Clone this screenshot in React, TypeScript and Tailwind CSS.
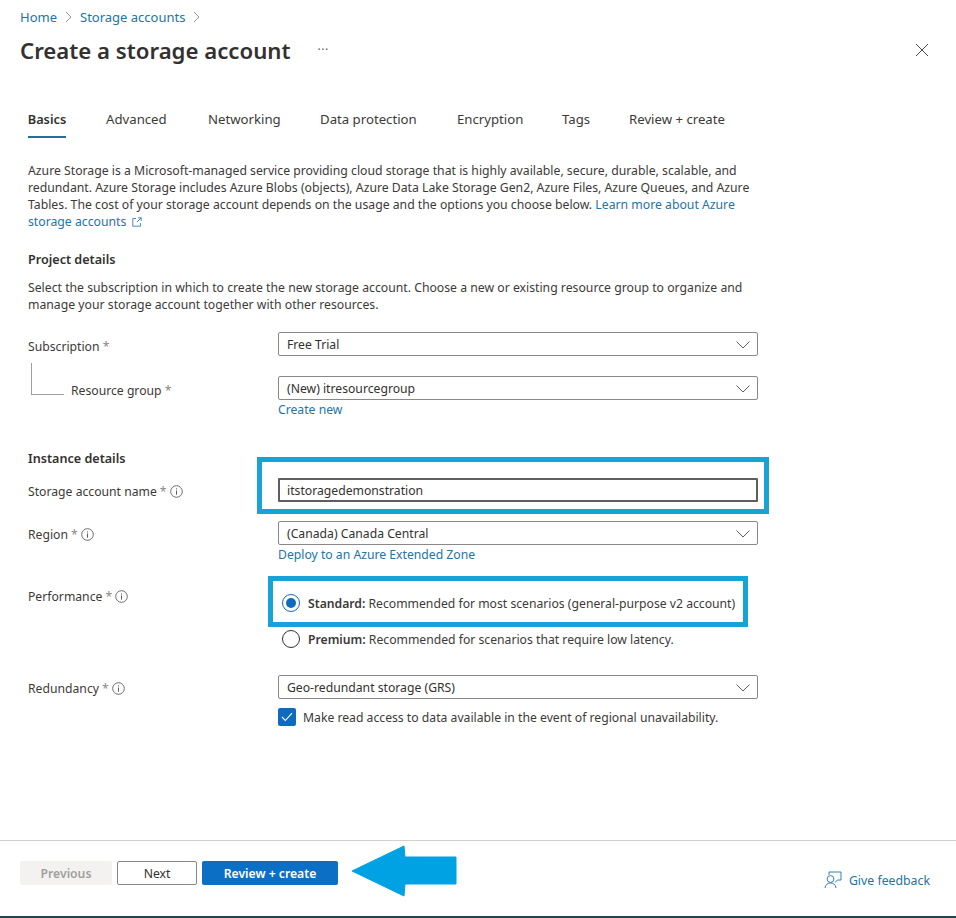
import React from "react";

const link = "text-[#2274a5]";

function Chevron() {
  return (
    <svg width="14" height="8" viewBox="0 0 14 8" className="absolute right-[7px] top-[8px]">
      <path d="M0.5 0.5 L7 7 L13.5 0.5" fill="none" stroke="#605e5c" strokeWidth="1" />
    </svg>
  );
}

function Info() {
  return (
    <svg width="13" height="13" viewBox="0 0 13 13" className="ml-[3px] shrink-0">
      <circle cx="6.5" cy="6.5" r="5.8" fill="none" stroke="#605e5c" strokeWidth="0.9" />
      <rect x="6" y="5.5" width="1" height="4.2" fill="#605e5c" />
      <rect x="6" y="3.4" width="1" height="1.1" fill="#605e5c" />
    </svg>
  );
}

function Select({ value }: { value: string }) {
  return (
    <div className="relative flex h-[24px] w-[480px] items-center rounded-[2px] border border-[#8a8886] pl-2 text-[#323130]">
      {value}
      <Chevron />
    </div>
  );
}

function Sep() {
  return (
    <svg width="7" height="12" viewBox="0 0 7 12">
      <path d="M1 1 L6 6 L1 11" fill="none" stroke="#8a8886" strokeWidth="0.9" />
    </svg>
  );
}

const tabs: [string, string][] = [
  ["Advanced", "w-[62px]"],
  ["Networking", "w-[72px]"],
  ["Data protection", "w-[97px]"],
  ["Encryption", "w-[65px]"],
  ["Tags", "w-[27px]"],
  ["Review + create", "w-[98px]"],
];

export default function App() {
  return (
    <div className="relative flex h-[918px] w-[956px] flex-col overflow-hidden border-b-2 border-[#1d4650] bg-white font-['Noto_Sans',sans-serif] text-[12.2px] leading-[17px] text-[#3b3a39]">
      <div className="mt-[9px] flex h-[16px] items-center gap-[8px] pl-[20px] text-[13px]">
        <span className={link}>Home</span>
        <Sep />
        <span className={link}>Storage accounts</span>
        <Sep />
      </div>

      <div className="mt-[7px] flex h-[36px] items-center pl-[20px] pr-[27px]">
        <h1 className="text-[22.2px] font-semibold text-[#323130]">Create a storage account</h1>
        <span className="-mt-[1px] ml-[27px] text-[12px] tracking-[0.5px] text-[#605e5c]">···</span>
        <svg width="14" height="14" viewBox="0 0 14 14" className="ml-auto">
          <path d="M1 1 L13 13 M13 1 L1 13" stroke="#4b4a49" strokeWidth="1" />
        </svg>
      </div>

      <div className="mt-[34px] flex h-[36px] gap-[40px] pl-[28px] text-[13.2px]">
        <div className="flex h-[36px] w-[38px] flex-col items-center justify-start whitespace-nowrap border-b-2 border-[#1f6f9f] text-[12.8px] font-semibold leading-[34px] text-[#323130]">
          Basics
        </div>
        {tabs.map(([t, w]) => (
          <div key={t} className={`${w} whitespace-nowrap leading-[34px]`}>
            {t}
          </div>
        ))}
      </div>

      <div className="mt-[24px] w-[730px] pl-[28px] text-[12.24px]">
        <p className="w-[730px] whitespace-nowrap">
          Azure Storage is a Microsoft-managed service providing cloud storage that is highly available, secure, durable, scalable, and
          <br />
          redundant. Azure Storage includes Azure Blobs (objects), Azure Data Lake Storage Gen2, Azure Files, Azure Queues, and Azure
          <br />
          Tables. The cost of your storage account depends on the usage and the options you choose below.{" "}
          <span className={link}>Learn more about Azure</span>
          <br />
          <span className={`${link} inline-flex items-center gap-[6px]`}>
            storage accounts
            <svg width="10" height="10" viewBox="0 0 10 10">
              <path d="M4 1.5 H0.8 V9.2 H8.5 V6 M5 5 L9.2 0.8 M6 0.8 H9.2 V4" fill="none" stroke="#2274a5" strokeWidth="0.8" />
            </svg>
          </span>
        </p>
      </div>

      <h2 className="mt-[21px] pl-[28px] text-[12.6px] font-semibold text-[#323130]">Project details</h2>

      <p className="mt-[11px] whitespace-nowrap pl-[28px] text-[12.24px]">
        Select the subscription in which to create the new storage account. Choose a new or existing resource group to organize and
        <br />
        manage your storage account together with other resources.
      </p>

      <div className="mt-[19px] flex pl-[28px]">
        <div className="w-[250px] pt-[6px]">
          Subscription <span className="text-[#8a8886]">*</span>
        </div>
        <Select value="Free Trial" />
      </div>

      <div className="relative mt-[20px] flex pl-[28px]">
        <div className="absolute -top-[13px] left-[31px] h-[32px] w-[33px] border-b border-l border-[#a19f9d]" />
        <div className="w-[250px] pl-[43px] pt-[6px]">
          Resource group <span className="text-[#8a8886]">*</span>
        </div>
        <Select value="(New) itresourcegroup" />
      </div>

      <div className={`mt-[1px] pl-[278px] ${link}`}>Create new</div>

      <h2 className="mt-[32px] pl-[28px] text-[12.6px] font-semibold text-[#323130]">Instance details</h2>

      <div className="mt-[11px] flex pl-[28px]">
        <div className="flex w-[250px] items-center pt-[2px]">
          Storage account name <span className="ml-[3px] text-[#8a8886]">*</span>
          <Info />
        </div>
        <div className="relative flex h-[24px] w-[480px] items-center rounded-[1px] border-2 border-[#605e5c] pl-[7px] text-[#323130]">
          itstoragedemonstration
          <div className="absolute -bottom-[14px] -left-[23px] -right-[13px] -top-[23px] border-[5px] border-[#17a2d8]" />
        </div>
      </div>

      <div className="mt-[19px] flex pl-[28px]">
        <div className="flex w-[250px] items-center pt-[3px]">
          Region <span className="ml-[3px] text-[#8a8886]">*</span>
          <Info />
        </div>
        <Select value="(Canada) Canada Central" />
      </div>

      <div className={`mt-[1px] pl-[278px] ${link}`}>Deploy to an Azure Extended Zone</div>

      <div className="mt-[25px] flex pl-[28px]">
        <div className="flex h-[17px] w-[250px] items-center self-start">
          Performance <span className="ml-[3px] text-[#8a8886]">*</span>
          <Info />
        </div>
        <div className="flex flex-col gap-[18px] pt-[6px]">
          <div className="relative flex items-center whitespace-nowrap pl-[4px]">
            <span className="flex h-[18px] w-[18px] items-center justify-center rounded-full border border-[#0f6cbd]">
              <span className="h-[10px] w-[10px] rounded-full bg-[#0f6cbd]" />
            </span>
            <span className="ml-[8px]">
              <b className="font-semibold">Standard:</b> Recommended for most scenarios (general-purpose v2 account)
            </span>
            <div className="absolute -bottom-[15px] -top-[18px] left-[-10px] w-[480px] border-[5px] border-[#17a2d8]" />
          </div>
          <div className="flex items-center whitespace-nowrap pl-[4px]">
            <span className="h-[18px] w-[18px] rounded-full border border-[#323130]" />
            <span className="ml-[8px]">
              <b className="font-semibold">Premium:</b> Recommended for scenarios that require low latency.
            </span>
          </div>
        </div>
      </div>

      <div className="mt-[27px] flex pl-[28px]">
        <div className="flex w-[250px] items-center pt-[3px]">
          Redundancy <span className="ml-[3px] text-[#8a8886]">*</span>
          <Info />
        </div>
        <Select value="Geo-redundant storage (GRS)" />
      </div>

      <div className="mt-[9px] flex items-center pl-[278px]">
        <span className="flex h-[18px] w-[18px] items-center justify-center rounded-[2px] bg-[#0f6cbd]">
          <svg width="12" height="10" viewBox="0 0 12 10">
            <path d="M1 5 L4.3 8.5 L11 1.2" fill="none" stroke="#fff" strokeWidth="1.1" />
          </svg>
        </span>
        <span className="ml-[7px]">Make read access to data available in the event of regional unavailability.</span>
      </div>

      <div className="mt-auto flex h-[76px] items-start border-t border-[#d2d0ce] pl-[20px] pr-[26px] pt-[20px]">
        <div className="relative flex gap-[5px] text-[12.2px] font-semibold">
          <div className="flex h-[24px] w-[92px] items-center justify-center rounded-[2px] bg-[#f3f2f1] pt-[1px] text-[#a19f9d]">Previous</div>
          <div className="flex h-[24px] w-[80px] items-center justify-center rounded-[2px] border border-[#8a8886] pt-[1px] font-normal text-[#323130]">Next</div>
          <div className="flex h-[24px] w-[136px] items-center justify-center rounded-[2px] bg-[#0b6fc6] pt-[1px] text-white">Review + create</div>
          <svg width="106" height="52" viewBox="0 0 106 52" className="absolute -top-[16px] left-[331px]">
            <path d="M1 26 L53 1 L54 12 L105 12 L105 39 L54 39 L53 51 Z" fill="#00a2e3" stroke="#00a2e3" strokeLinejoin="round" />
          </svg>
        </div>
        <div className={`ml-auto mt-[10px] flex items-center gap-[7px] text-[12.3px] ${link}`}>
          <svg width="18" height="18" viewBox="0 0 18 18">
            <path d="M5 4 V1 H17 V9 H13.5 L11 11.5" fill="none" stroke="#2274a5" strokeWidth="0.9" />
            <circle cx="6.5" cy="8" r="3.4" fill="none" stroke="#2274a5" strokeWidth="0.9" />
            <path d="M1 17 C1.5 13.5 3.5 12 6.5 12 C9.5 12 11.5 13.5 12 17" fill="none" stroke="#2274a5" strokeWidth="0.9" />
          </svg>
          Give feedback
        </div>
      </div>
    </div>
  );
}
